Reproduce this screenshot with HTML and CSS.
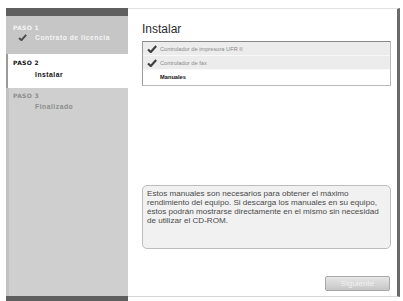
FILE: index.html
```html
<!DOCTYPE html>
<html lang="es">
<head>
    <meta charset="UTF-8">
    <title>Instalar</title>
    <link rel="stylesheet" href="styles.css">
</head>
<body>
    <div class="window">
        <aside class="sidebar">
            <div class="sidebar-top"></div>
            <div class="step done">
                <div class="step-label">PASO 1</div>
                <div class="step-name">
                    <svg class="tick" width="9" height="7" viewBox="0 0 10 8"><path d="M1 4.5 L3.8 7 L9.2 1" fill="none" stroke="#4a4a4a" stroke-width="2.2"/></svg>
                    Contrato de licencia
                </div>
            </div>
            <div class="step current">
                <div class="step-label">PASO 2</div>
                <div class="step-name">Instalar</div>
            </div>
            <div class="step todo">
                <div class="step-label">PASO 3</div>
                <div class="step-name">Finalizado</div>
            </div>
            <div class="sidebar-fill"></div>
            <div class="sidebar-bottom"></div>
        </aside>
        <main class="panel">
            <h1>Instalar</h1>
            <ul class="items">
                <li class="item ok">
                    <span class="mark"><svg width="10" height="8" viewBox="0 0 10 8"><path d="M1 4.5 L3.8 7 L9.2 1" fill="none" stroke="#3f3f3f" stroke-width="2.2"/></svg></span>
                    Controlador de impresora UFR II
                </li>
                <li class="item ok">
                    <span class="mark"><svg width="10" height="8" viewBox="0 0 10 8"><path d="M1 4.5 L3.8 7 L9.2 1" fill="none" stroke="#3f3f3f" stroke-width="2.2"/></svg></span>
                    Controlador de fax
                </li>
                <li class="item active"><span class="mark"></span>Manuales</li>
            </ul>
            <div class="note">
                Estos manuales son necesarios para obtener el máximo rendimiento del equipo. Si descarga los manuales en su equipo, éstos podrán mostrarse directamente en el mismo sin necesidad de utilizar el CD-ROM.
            </div>
            <div class="actions">
                <button class="btn" disabled>Siguiente</button>
            </div>
        </main>
    </div>
</body>
</html>
```

FILE: styles.css
```css
* {
    margin: 0;
    padding: 0;
    box-sizing: border-box;
}
body {
    background: #ffffff;
    font-family: "Liberation Sans", Arial, sans-serif;
    color: #333333;
    overflow: hidden;
}
.window {
    display: flex;
    margin: 8px 0 0 6px;
    width: 394px;
    height: 293px;
}
.sidebar {
    width: 122px;
    display: flex;
    flex-direction: column;
    background: #cfcfcf;
    border-left: 3px solid #c2c2c2;
}
.sidebar-top {
    height: 8px;
    background: #5f5f5f;
    margin-left: -3px;
}
.step {
    padding: 0 0 0 4px;
}
.step-label {
    font-family: "DejaVu Sans", Verdana, sans-serif;
    font-size: 6px;
    font-weight: bold;
    letter-spacing: 0.3px;
}
.step-name {
    font-size: 6.8px;
    font-weight: bold;
    letter-spacing: 0.5px;
    padding-left: 22px;
    display: flex;
    align-items: center;
}
.step.done {
    height: 38px;
    background: #c6c6c6;
    color: #f4f4f4;
    padding-top: 8px;
    margin-left: -3px;
    padding-left: 7px;
}
.step.done .step-name {
    padding-left: 5px;
    margin-top: 3px;
}
.step.done .tick {
    margin-right: 8px;
}
.step.current {
    height: 34px;
    background: #ffffff;
    color: #111111;
    margin-left: -3px;
    margin-right: -1px;
    border-left: 2px solid #9a9a9a;
    padding-top: 5px;
    padding-left: 5px;
}
.step.current .step-name {
    margin-top: 5px;
}
.step.todo {
    color: #8c8c8c;
    padding-top: 4px;
}
.step.todo .step-name {
    margin-top: 4px;
}
.sidebar-fill {
    flex: 1;
}
.sidebar-bottom {
    height: 5px;
    background: #5f5f5f;
    margin-left: -3px;
}
.panel {
    width: 272px;
    height: 289px;
    background: #ffffff;
    border-top: 1px solid #e2e2e2;
    border-bottom: 1px solid #d6d6d6;
    border-right: 3px solid #6a6a6a;
    padding: 12px 6px 0 14px;
    display: flex;
    flex-direction: column;
}
h1 {
    font-weight: normal;
    font-size: 12px;
    line-height: 16px;
    color: #2d2d2d;
    margin-bottom: 4px;
}
.items {
    list-style: none;
    border: 1px solid #b9b9b9;
    border-top: 1px solid #8a8a8a;
    border-left: 1px solid #9a9a9a;
    height: 45px;
}
.item {
    height: 14px;
    font-size: 5.7px;
    color: #8a8a8a;
    display: flex;
    align-items: center;
}
.item.ok {
    background: #ececec;
    border-bottom: 1px solid #f8f8f8;
}
.mark {
    width: 17px;
    padding-left: 4px;
    display: flex;
    align-items: center;
}
.item.active {
    color: #111111;
    font-weight: bold;
}
.note {
    margin-top: 99px;
    height: 64px;
    background: #f1f1f1;
    border: 1px solid #bdbdbd;
    border-radius: 5px;
    padding: 3px 4px;
    font-size: 8.1px;
    line-height: 9px;
    color: #4a4a4a;
}
.actions {
    margin-top: auto;
    padding-bottom: 5px;
    display: flex;
    justify-content: flex-end;
}
.btn {
    width: 65px;
    height: 15px;
    margin-right: 1px;
    border: 1px solid #a8a8a8;
    border-radius: 2px;
    background: linear-gradient(#e6e6e6, #c6c6c6);
    color: #f2f2f2;
    font-family: "Liberation Sans", Arial, sans-serif;
    font-size: 8px;
}
```
